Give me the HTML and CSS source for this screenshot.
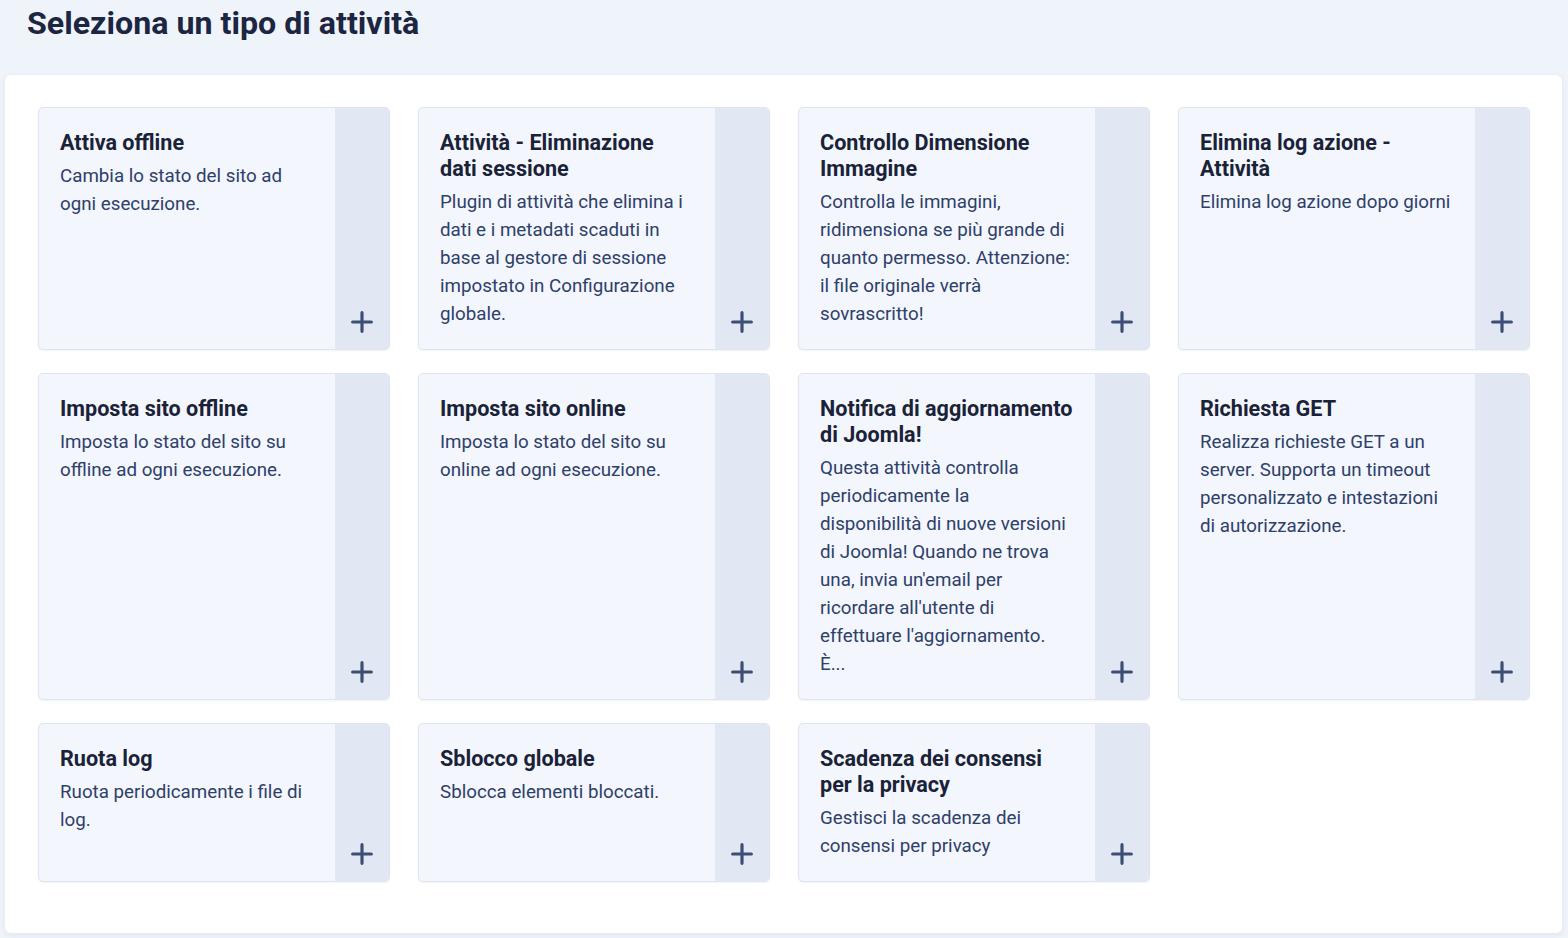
FILE: index.html
```html
<!DOCTYPE html>
<html lang="it">
<head>
<meta charset="utf-8">
<title>Seleziona un tipo di attività</title>
<link rel="stylesheet" href="styles.css">
</head>
<body>
<header class="page-header">
  <h1 class="page-title">Seleziona un tipo di attività</h1>
</header>
<main class="panel">
  <div class="grid">
    <a class="card" href="#">
      <div class="card-body">
        <h2 class="card-title">Attiva offline</h2>
        <p class="card-text">Cambia lo stato del sito ad ogni esecuzione.</p>
      </div>
      <div class="card-action"><svg class="plus" viewBox="0 0 20 20"><path d="M10 1.5v17M1.5 10h17"/></svg></div>
    </a>
    <a class="card" href="#">
      <div class="card-body">
        <h2 class="card-title">Attività - Eliminazione dati sessione</h2>
        <p class="card-text">Plugin di attività che elimina i dati e i metadati scaduti in base al gestore di sessione impostato in Configurazione globale.</p>
      </div>
      <div class="card-action"><svg class="plus" viewBox="0 0 20 20"><path d="M10 1.5v17M1.5 10h17"/></svg></div>
    </a>
    <a class="card" href="#">
      <div class="card-body">
        <h2 class="card-title">Controllo Dimensione Immagine</h2>
        <p class="card-text">Controlla le immagini, ridimensiona se più grande di quanto permesso. Attenzione: il file originale verrà sovrascritto!</p>
      </div>
      <div class="card-action"><svg class="plus" viewBox="0 0 20 20"><path d="M10 1.5v17M1.5 10h17"/></svg></div>
    </a>
    <a class="card" href="#">
      <div class="card-body">
        <h2 class="card-title">Elimina log azione - Attività</h2>
        <p class="card-text">Elimina log azione dopo giorni</p>
      </div>
      <div class="card-action"><svg class="plus" viewBox="0 0 20 20"><path d="M10 1.5v17M1.5 10h17"/></svg></div>
    </a>
    <a class="card" href="#">
      <div class="card-body">
        <h2 class="card-title">Imposta sito offline</h2>
        <p class="card-text">Imposta lo stato del sito su offline ad ogni esecuzione.</p>
      </div>
      <div class="card-action"><svg class="plus" viewBox="0 0 20 20"><path d="M10 1.5v17M1.5 10h17"/></svg></div>
    </a>
    <a class="card" href="#">
      <div class="card-body">
        <h2 class="card-title">Imposta sito online</h2>
        <p class="card-text">Imposta lo stato del sito su online ad ogni esecuzione.</p>
      </div>
      <div class="card-action"><svg class="plus" viewBox="0 0 20 20"><path d="M10 1.5v17M1.5 10h17"/></svg></div>
    </a>
    <a class="card" href="#">
      <div class="card-body">
        <h2 class="card-title">Notifica di aggiornamento di Joomla!</h2>
        <p class="card-text">Questa attività controlla periodicamente la disponibilità di nuove versioni di Joomla! Quando ne trova una, invia un'email per ricordare all'utente di effettuare l'aggiornamento. È...</p>
      </div>
      <div class="card-action"><svg class="plus" viewBox="0 0 20 20"><path d="M10 1.5v17M1.5 10h17"/></svg></div>
    </a>
    <a class="card" href="#">
      <div class="card-body">
        <h2 class="card-title">Richiesta GET</h2>
        <p class="card-text">Realizza richieste GET a un server. Supporta un timeout personalizzato e intestazioni di autorizzazione.</p>
      </div>
      <div class="card-action"><svg class="plus" viewBox="0 0 20 20"><path d="M10 1.5v17M1.5 10h17"/></svg></div>
    </a>
    <a class="card" href="#">
      <div class="card-body">
        <h2 class="card-title">Ruota log</h2>
        <p class="card-text">Ruota periodicamente i file di log.</p>
      </div>
      <div class="card-action"><svg class="plus" viewBox="0 0 20 20"><path d="M10 1.5v17M1.5 10h17"/></svg></div>
    </a>
    <a class="card" href="#">
      <div class="card-body">
        <h2 class="card-title">Sblocco globale</h2>
        <p class="card-text">Sblocca elementi bloccati.</p>
      </div>
      <div class="card-action"><svg class="plus" viewBox="0 0 20 20"><path d="M10 1.5v17M1.5 10h17"/></svg></div>
    </a>
    <a class="card" href="#">
      <div class="card-body">
        <h2 class="card-title">Scadenza dei consensi per la privacy</h2>
        <p class="card-text">Gestisci la scadenza dei consensi per privacy</p>
      </div>
      <div class="card-action"><svg class="plus" viewBox="0 0 20 20"><path d="M10 1.5v17M1.5 10h17"/></svg></div>
    </a>
  </div>
</main>
</body>
</html>
```

FILE: styles.css
```css
* {
  box-sizing: border-box;
}

html,
body {
  margin: 0;
  padding: 0;
}

body {
  background: #eff3fa;
  font-family: Roboto, "Liberation Sans", Arial, sans-serif;
  color: #22335a;
  min-height: 938px;
}

.page-header {
  height: 75px;
  padding: 4px 27px 0;
}

.page-title {
  margin: 0;
  font-size: 32.2px;
  line-height: 38px;
  font-weight: 700;
  color: #1c2541;
}

.panel {
  margin: 0 6px 0 5px;
  height: 858px;
  background: #ffffff;
  border-radius: 6px;
  box-shadow: 0 2px 6px rgba(42, 69, 128, 0.08);
  padding: 32px 32px 0 33px;
}

.grid {
  display: grid;
  grid-template-columns: repeat(4, 1fr);
  column-gap: 28px;
  row-gap: 23px;
}

.card {
  display: flex;
  background: #f3f6fc;
  border: 1px solid #dfe5ef;
  border-radius: 5px;
  overflow: hidden;
  text-decoration: none;
  box-shadow: 0 1px 2px rgba(30, 50, 90, 0.06);
}

.card-body {
  flex: 1;
  min-width: 0;
  padding: 22px 22px 21px 21px;
}

.card-title {
  margin: 0 0 6px;
  font-size: 21.6px;
  line-height: 26px;
  font-weight: 700;
  color: #1a2238;
}

.card-text {
  margin: 0;
  font-size: 18.75px;
  line-height: 28px;
  font-weight: 400;
  color: #2e4069;
}

.card-action {
  flex: 0 0 54px;
  background: #e2e8f3;
  display: flex;
  flex-direction: column;
  justify-content: flex-end;
  align-items: center;
  padding-bottom: 16px;
}

.plus {
  width: 22px;
  height: 22px;
  fill: none;
  stroke: #3c4e74;
  stroke-width: 2.9;
  stroke-linecap: round;
}
```
